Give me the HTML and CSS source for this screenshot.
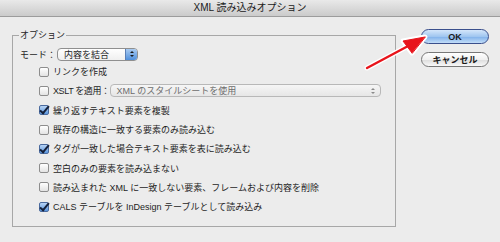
FILE: index.html
```html
<!DOCTYPE html>
<html lang="ja">
  <head>
    <meta charset="UTF-8" />
    <title>XML 読み込みオプション</title>
    <link rel="stylesheet" href="styles.css">
  </head>
  <body>
    <div class="titlebar">XML 読み込みオプション</div>

    <div class="dialog-body">
      <fieldset class="options">
        <legend>オプション</legend>

        <div class="mode-row">
          <span class="mode-label">モード：</span>
          <div class="popup">
            <span>内容を結合</span>
            <span class="stepper">
              <svg width="6" height="8" viewBox="0 0 6 8">
                <path d="M1 3 L3 1 L5 3 Z M1 5 L3 7 L5 5 Z" fill="#1a1a1a" />
              </svg>
            </span>
          </div>
        </div>

        <div class="check-row"><span class="box"></span>リンクを作成</div>
        <div class="check-row">
          <span class="box"></span><span class="tight">XSLT を適用：</span>
          <div class="popup popup-disabled">
            <span>XML のスタイルシートを使用</span>
            <svg class="mini-arrows" width="6" height="8" viewBox="0 0 6 8">
              <path d="M1 3 L3 1 L5 3 Z M1 5 L3 7 L5 5 Z" fill="#8a8a8a" />
            </svg>
          </div>
        </div>
        <div class="check-row"><span class="box checked"></span>繰り返すテキスト要素を複製</div>
        <div class="check-row"><span class="box"></span>既存の構造に一致する要素のみ読み込む</div>
        <div class="check-row"><span class="box checked"></span>タグが一致した場合テキスト要素を表に読み込む</div>
        <div class="check-row"><span class="box"></span>空白のみの要素を読み込まない</div>
        <div class="check-row"><span class="box"></span>読み込まれた XML に一致しない要素、フレームおよび内容を削除</div>
        <div class="check-row"><span class="box checked"></span>CALS テーブルを InDesign テーブルとして読み込み</div>
      </fieldset>

      <div class="buttons">
        <button class="btn btn-default">OK</button>
        <button class="btn">キャンセル</button>
      </div>
    </div>

    <!-- annotation arrow drawn over the dialog -->
    <svg class="annotation" width="500" height="242" viewBox="0 0 500 242">
      <g stroke="#ffffff" stroke-width="5" stroke-linecap="round" fill="#ffffff" stroke-linejoin="round">
        <line x1="367" y1="68" x2="410" y2="45" />
        <path d="M425 37 L403 41 L412 53 Z" />
      </g>
      <g stroke="#e8141b" stroke-width="2.4" stroke-linecap="round" fill="#e8141b">
        <line x1="367" y1="68" x2="410" y2="45" />
        <path d="M425 37 L403 41 L412 53 Z" stroke-width="1" />
      </g>
    </svg>
  </body>
</html>
```

FILE: styles.css
```css
:root {
  --bg: #ececec;
  --text: #1e1e1e;
  --border: #a7a7a7;
}

* {
  box-sizing: border-box;
}

body {
  margin: 0;
  width: 500px;
  height: 242px;
  overflow: hidden;
  position: relative;
  background-color: var(--bg);
  color: var(--text);
  font-family: "Liberation Sans", "Noto Sans CJK JP", sans-serif;
  font-size: 9px;
}

.titlebar {
  height: 17px;
  line-height: 16px;
  text-align: center;
  font-size: 10px;
  color: #1a1a1a;
  background: linear-gradient(#e9e9e9, #cbcbcb);
  border-bottom: 1px solid #9c9c9c;
}

.dialog-body {
  display: flex;
  align-items: flex-start;
  padding: 12px 0 0 12px;
}

.options {
  width: 384px;
  height: 198px;
  margin: 0;
  padding: 0 0 0 7px;
  border: 1px solid var(--border);
}

.options legend {
  padding: 0 1px;
  margin-left: -1px;
  line-height: 12px;
}

.mode-row {
  display: flex;
  align-items: center;
  height: 14px;
  margin-top: 6px;
}

.mode-label {
  width: 37px;
}

.popup {
  display: flex;
  align-items: center;
  justify-content: space-between;
  width: 81px;
  height: 13px;
  padding-left: 6px;
  border: 1px solid #8f8f8f;
  border-radius: 4px;
  background: linear-gradient(#ffffff, #efefef);
  overflow: hidden;
}

.stepper {
  display: flex;
  align-items: center;
  justify-content: center;
  width: 12px;
  height: 100%;
  background: linear-gradient(#a9cbf1, #4f8fdc);
  border-left: 1px solid #5a7fb6;
}

.check-row {
  display: flex;
  align-items: center;
  height: 19.3px;
  padding-left: 19px;
  white-space: nowrap;
}

.mode-row + .check-row {
  margin-top: 1px;
}

.tight {
  letter-spacing: -0.4px;
}

.box {
  width: 10px;
  height: 10px;
  margin-right: 4px;
  border: 1px solid #8d8d8d;
  border-radius: 2px;
  background: linear-gradient(#ffffff, #e3e3e3);
  position: relative;
}

.box.checked {
  border-color: #4a6a9e;
  background: linear-gradient(#b7d3f4, #5b97df);
}

.box.checked::after {
  content: "";
  position: absolute;
  left: 2px;
  top: -2px;
  width: 3px;
  height: 8px;
  border: solid #15203a;
  border-width: 0 2px 2px 0;
  transform: rotate(40deg);
}

.popup-disabled {
  width: 271px;
  margin-left: 0;
  border-color: #b8b8b8;
  color: #6d6d6d;
  background: linear-gradient(#f6f6f6, #e6e6e6);
}

.mini-arrows {
  margin-right: 4px;
}

.buttons {
  display: flex;
  flex-direction: column;
  gap: 8px;
  margin-left: 25px;
}

.btn {
  width: 68px;
  height: 15px;
  padding: 0;
  font-family: inherit;
  font-size: 9px;
  font-weight: bold;
  color: #1a1a1a;
  border: 1px solid #777;
  border-radius: 8px;
  background: linear-gradient(#ffffff 0%, #f0f0f0 50%, #dcdcdc 51%, #f8f8f8 100%);
}

.btn-default {
  border-color: #3a4f8c;
  background: linear-gradient(#d4e6fa 0%, #a0c6f0 50%, #7fb0ea 51%, #c2ddf8 100%);
}

.annotation {
  position: absolute;
  left: 0;
  top: 0;
  pointer-events: none;
}
```
